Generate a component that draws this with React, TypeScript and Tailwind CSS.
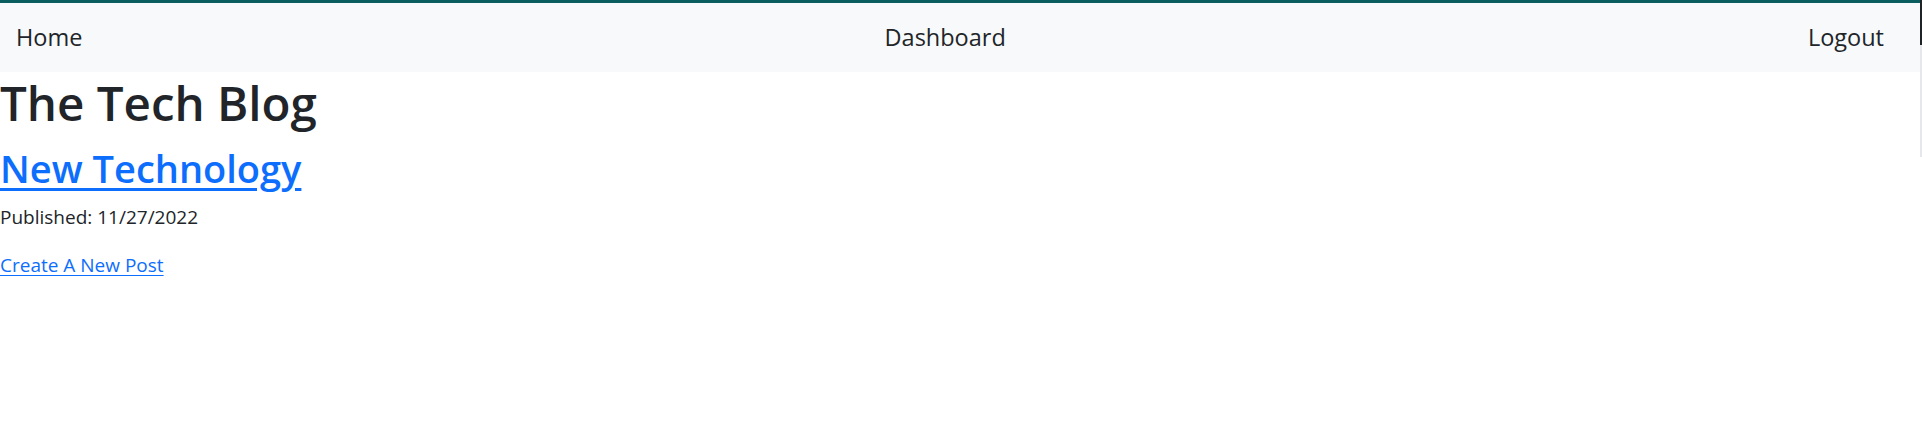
export default function App() {
  return (
    <div className="flex w-[1922px] h-[439px] bg-white text-[#212529] font-['Segoe_UI','Open_Sans',sans-serif]">
      <div className="flex flex-col w-[1920px]">
        <nav className="flex items-center justify-between h-[72px] border-t-[3px] border-[#0b5e60] bg-[#f8f9fa] pl-4 pr-[36px] text-[23.5px]">
          <a className="leading-none">Home</a>
          <a className="leading-none">Dashboard</a>
          <a className="leading-none">Logout</a>
        </nav>

        <main className="flex flex-col items-start">
          <h1 className="mt-[2px] text-[47.5px] font-semibold leading-[1.2]">The Tech Blog</h1>
          <a className="mt-[15px] text-[38px] font-semibold leading-[1.2] text-[#0d6efd] underline underline-offset-[5px]">New Technology</a>
          <p className="mt-[11px] text-[19px] leading-normal">Published: 11/27/2022</p>
          <a className="mt-5 text-[19px] leading-normal text-[#0d6efd] underline underline-offset-[3px]">Create A New Post</a>
        </main>
      </div>

      <div className="flex flex-col w-[2px]">
        <div className="h-[45px] bg-[#1f2326]" />
        <div className="h-[112px] bg-[#e5e7eb]" />
      </div>
    </div>
  );
}
